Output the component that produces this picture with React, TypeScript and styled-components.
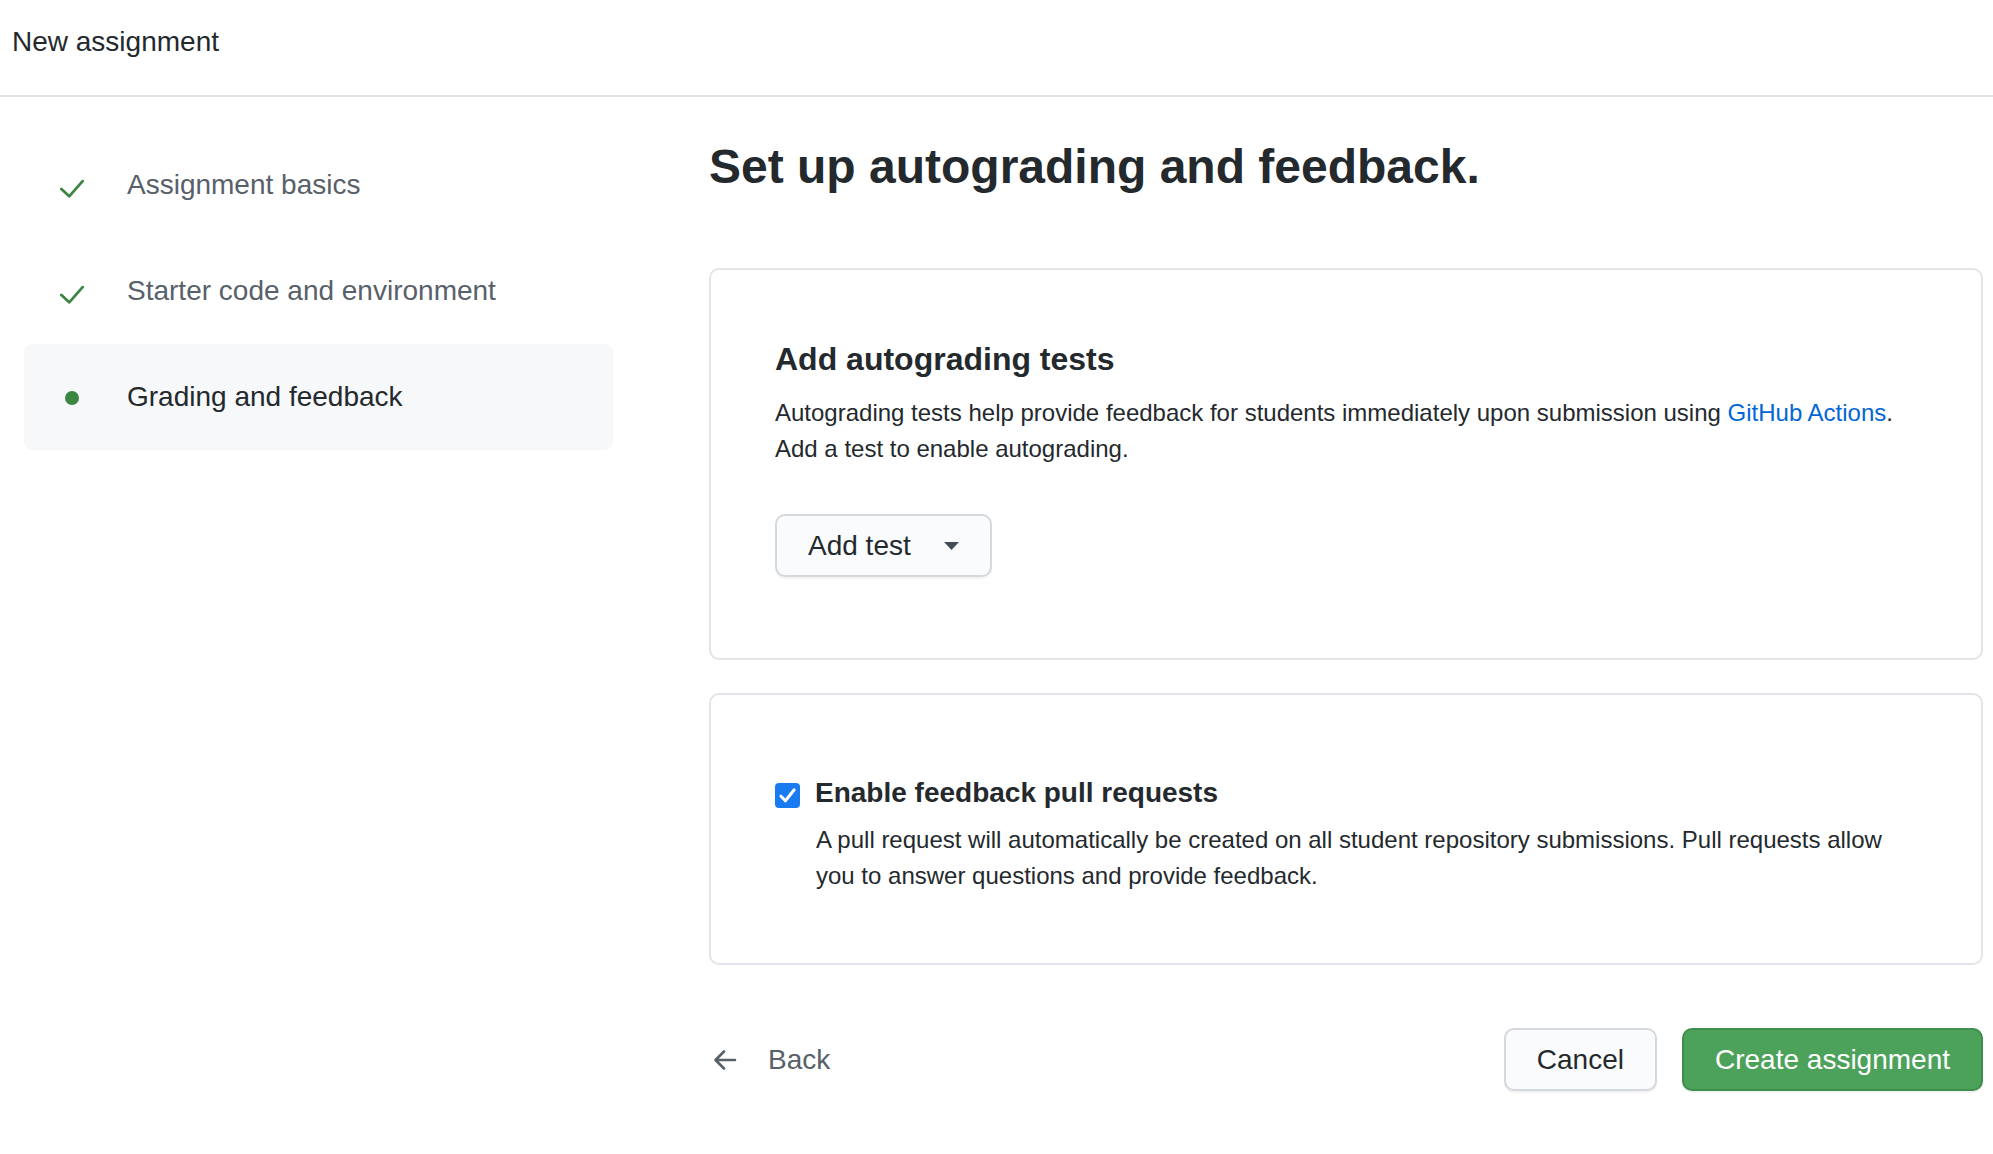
import React from "react";
import styled, { createGlobalStyle } from "styled-components";

const GlobalStyle = createGlobalStyle`
  html, body {
    margin: 0;
    padding: 0;
    background: #ffffff;
  }
  body {
    font-family: "Liberation Sans", Arial, Helvetica, sans-serif;
    color: #24292e;
    -webkit-font-smoothing: antialiased;
  }
  * { box-sizing: border-box; }
`;

const Page = styled.div`
  min-height: 1154px;
  background: #ffffff;
`;

const Header = styled.header`
  padding: 21px 12px 32px;
  border-bottom: 2px solid #e1e4e8;
  font-size: 28px;
  line-height: 42px;
  color: #24292e;
`;

const Body = styled.div`
  display: flex;
  align-items: flex-start;
  padding: 0 10px 0 24px;
  gap: 96px;
`;

const Sidebar = styled.nav`
  width: 589px;
  flex: 0 0 589px;
  padding-top: 35px;
  display: flex;
  flex-direction: column;
`;

const StepItem = styled.div<{ $active?: boolean }>`
  display: flex;
  align-items: center;
  height: 106px;
  padding-left: 36px;
  gap: 43px;
  border-radius: 8px;
  background: ${(p) => (p.$active ? "#f6f8fa" : "transparent")};
  color: ${(p) => (p.$active ? "#24292e" : "#586069")};
  font-size: 28px;
  line-height: 42px;
`;

const StepIcon = styled.span<{ $offset?: number }>`
  width: 24px;
  flex: 0 0 24px;
  display: flex;
  align-items: center;
  justify-content: center;
  margin-top: ${(p) => p.$offset ?? 0}px;
`;

const Dot = styled.span`
  width: 14px;
  height: 14px;
  border-radius: 50%;
  background: #3b8640;
`;

const Main = styled.main`
  flex: 1;
  min-width: 0;
  padding-top: 40px;
  padding-bottom: 60px;
`;

const Title = styled.h1`
  margin: 0 0 71px;
  font-size: 48px;
  line-height: 60px;
  font-weight: 700;
  color: #24292e;
`;

const Card = styled.section<{ $pt: number; $pb: number }>`
  border: 2px solid #e1e4e8;
  border-radius: 10px;
  padding: ${(p) => p.$pt}px 64px ${(p) => p.$pb}px;
  margin-bottom: 33px;
`;

const CardHeading = styled.h2`
  margin: 0 0 16px;
  font-size: 32px;
  line-height: 40px;
  font-weight: 700;
  color: #24292e;
`;

const Text = styled.p<{ $indent?: number }>`
  margin: 0;
  font-size: 24px;
  line-height: 36px;
  color: #24292e;
  padding-left: ${(p) => p.$indent ?? 0}px;
`;

const Link = styled.a`
  color: #0366d6;
  text-decoration: none;
`;

const DropdownButton = styled.button`
  margin-top: 47px;
  display: inline-flex;
  align-items: center;
  gap: 33px;
  padding: 8.5px 31px;
  border: 2px solid #d5d8dc;
  border-radius: 10px;
  background: #fafbfc;
  box-shadow: 0 2px 0 rgba(27, 31, 35, 0.05);
  font-family: inherit;
  font-size: 28px;
  line-height: 42px;
  color: #24292e;
  cursor: pointer;
`;

const CheckRow = styled.label`
  display: flex;
  align-items: center;
  gap: 15px;
  margin-bottom: 11px;
`;

const CheckBox = styled.span`
  width: 25px;
  height: 25px;
  flex: 0 0 25px;
  margin-top: 5px;
  display: flex;
`;

const CheckTitle = styled.span`
  font-size: 28px;
  line-height: 36px;
  font-weight: 700;
  color: #24292e;
`;

const Footer = styled.div`
  display: flex;
  align-items: center;
  justify-content: space-between;
  margin-top: 63px;
`;

const BackLink = styled.a`
  display: flex;
  align-items: center;
  gap: 31px;
  padding-left: 4px;
  font-size: 28px;
  line-height: 42px;
  color: #586069;
  text-decoration: none;
  cursor: pointer;
`;

const Actions = styled.div`
  display: flex;
  align-items: center;
  gap: 25px;
`;

const Button = styled.button<{ $primary?: boolean }>`
  padding: 8.5px 31px;
  border-radius: 10px;
  border: 2px solid ${(p) => (p.$primary ? "#3f8f4c" : "#d5d8dc")};
  background: ${(p) => (p.$primary ? "#4ca25a" : "#fafbfc")};
  color: ${(p) => (p.$primary ? "#ffffff" : "#24292e")};
  box-shadow: 0 2px 0 rgba(27, 31, 35, 0.06);
  font-family: inherit;
  font-size: 28px;
  line-height: 42px;
  cursor: pointer;
`;

const CheckIcon = () => (
  <svg width="26" height="21" viewBox="0 0 26 21" fill="none">
    <polyline
      points="1.5,11 10,19 24.5,2.5"
      stroke="#3b8640"
      strokeWidth="3"
      strokeLinecap="round"
      strokeLinejoin="round"
    />
  </svg>
);

const Caret = () => (
  <svg width="15" height="8" viewBox="0 0 15 8">
    <polygon points="0,0 15,0 7.5,8" fill="#444d56" />
  </svg>
);

const ArrowLeft = () => (
  <svg width="24" height="22" viewBox="0 0 24 22" fill="none">
    <path
      d="M22 11H3M11 2.5L2.5 11L11 19.5"
      stroke="#586069"
      strokeWidth="2.6"
      strokeLinecap="round"
      strokeLinejoin="round"
    />
  </svg>
);

const CheckedBox = () => (
  <svg width="25" height="25" viewBox="0 0 25 25">
    <rect x="0" y="0" width="25" height="25" rx="4" fill="#1a7bf0" />
    <path
      d="M6 13.2L10.4 17.8L19.2 6.8"
      stroke="#ffffff"
      strokeWidth="3"
      fill="none"
      strokeLinecap="round"
      strokeLinejoin="round"
    />
  </svg>
);

const steps = [
  { label: "Assignment basics", done: true },
  { label: "Starter code and environment", done: true },
  { label: "Grading and feedback", done: false },
];

export default function App() {
  return (
    <Page>
      <GlobalStyle />
      <Header>New assignment</Header>
      <Body>
        <Sidebar>
          {steps.map((s) => (
            <StepItem key={s.label} $active={!s.done}>
              <StepIcon $offset={s.done ? 7 : 2}>
                {s.done ? <CheckIcon /> : <Dot />}
              </StepIcon>
              <span>{s.label}</span>
            </StepItem>
          ))}
        </Sidebar>
        <Main>
          <Title>Set up autograding and feedback.</Title>
          <Card $pt={69} $pb={81}>
            <CardHeading>Add autograding tests</CardHeading>
            <Text>
              Autograding tests help provide feedback for students immediately
              upon submission using <Link href="#">GitHub Actions</Link>.
              <br />
              Add a test to enable autograding.
            </Text>
            <DropdownButton type="button">
              <span>Add test</span>
              <Caret />
            </DropdownButton>
          </Card>
          <Card $pt={80} $pb={69}>
            <CheckRow>
              <CheckBox>
                <CheckedBox />
              </CheckBox>
              <CheckTitle>Enable feedback pull requests</CheckTitle>
            </CheckRow>
            <Text $indent={41}>
              A pull request will automatically be created on all student
              repository submissions. Pull requests allow you to answer
              questions and provide feedback.
            </Text>
          </Card>
          <Footer>
            <BackLink>
              <ArrowLeft />
              <span>Back</span>
            </BackLink>
            <Actions>
              <Button type="button">Cancel</Button>
              <Button type="button" $primary>
                Create assignment
              </Button>
            </Actions>
          </Footer>
        </Main>
      </Body>
    </Page>
  );
}
